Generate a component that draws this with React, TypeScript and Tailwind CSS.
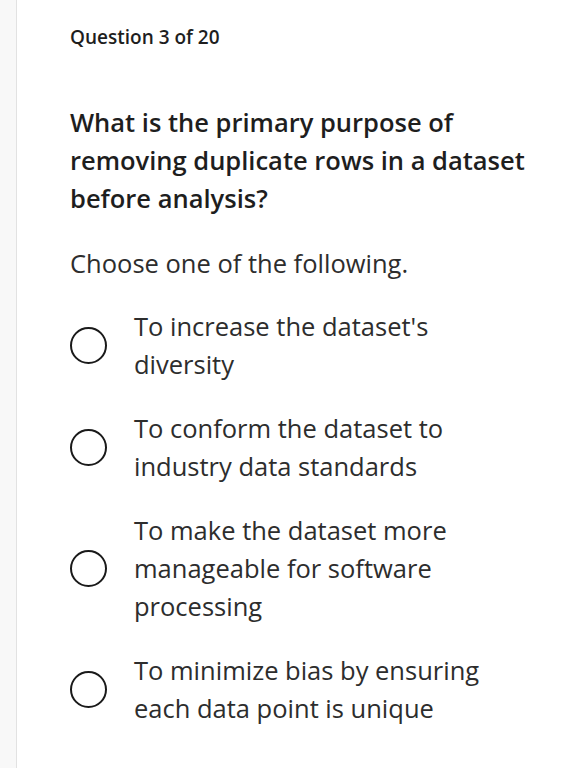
import React from "react";

const options = [
  "To increase the dataset's diversity",
  "To conform the dataset to industry data standards",
  "To make the dataset more manageable for software processing",
  "To minimize bias by ensuring each data point is unique",
];

export default function App() {
  return (
    <div className="flex min-h-[768px] bg-white font-['Open_Sans',sans-serif]">
      {/* left rail */}
      <div className="w-[17px] shrink-0 border-r border-[#e2e2e2] bg-[#f8f8f8]" />

      <main className="flex-1 pl-[53px] pr-[30px]">
        <p className="mt-[25px] text-[19px] font-semibold leading-[24px] text-[#1e1e1e]">
          Question 3 of 20
        </p>

        <h1 className="mt-[54px] w-[480px] text-[25.5px] font-semibold leading-[38px] text-[#1e1e1e]">
          What is the primary purpose of removing duplicate rows in a dataset before analysis?
        </h1>

        <p className="mt-[27px] text-[25.5px] leading-[38px] text-[#2d2d2d]">
          Choose one of the following.
        </p>

        <ul className="mt-[25px] flex flex-col gap-[26px]">
          {options.map((opt) => (
            <li key={opt} className="flex items-center gap-[27px]">
              <span className="h-[37px] w-[37px] shrink-0 rounded-full border-[2.5px] border-[#1a1a1a]" />
              <span className="w-[360px] text-[25.5px] leading-[38px] text-[#2d2d2d]">{opt}</span>
            </li>
          ))}
        </ul>
      </main>
    </div>
  );
}
